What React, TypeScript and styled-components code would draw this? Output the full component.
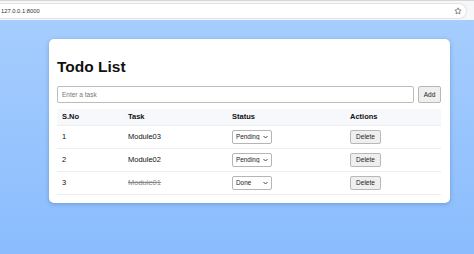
import React from "react";
import styled, { createGlobalStyle } from "styled-components";

const GlobalStyle = createGlobalStyle`
  html, body {
    margin: 0;
    padding: 0;
    width: 474px;
    height: 254px;
    overflow: hidden;
    font-family: "Liberation Sans", Arial, sans-serif;
  }
`

const Page = styled.div`
  width: 474px;
  height: 254px;
  display: flex;
  flex-direction: column;
  background: #fff;
`

const BrowserBar = styled.div`
  height: 20px;
  display: flex;
  flex-direction: column;
  background: #f6f7f8;
  border-top: 1px solid #d7d7d7;
  box-sizing: border-box;
  padding: 2px 7px 1px 0;
`

const AddressPill = styled.div`
  flex: 1;
  display: flex;
  align-items: center;
  justify-content: space-between;
  background: #fff;
  border: 1px solid #e3e3e3;
  border-left: none;
  border-radius: 0 9px 9px 0;
  padding: 0 4px 0 1px;
  font-size: 5.8px;
  color: #333;
`

const Viewport = styled.div`
  flex: 1;
  background: linear-gradient(180deg, #a6cdfe 0%, #8abcfd 100%);
  padding: 19px 24px 0 49px;
`

const Card = styled.div`
  width: 401px;
  height: 164px;
  box-sizing: border-box;
  background: #fff;
  border-radius: 5px;
  box-shadow: 0 1px 4px rgba(40, 80, 140, 0.35);
  padding: 18px 9px 0 8px;
`

const Title = styled.h1`
  margin: 0 0 9px 0;
  font-size: 15.5px;
  line-height: 20px;
  font-weight: 700;
  color: #111;
`

const InputRow = styled.div`
  display: flex;
  gap: 4px;
  height: 17px;
  margin-bottom: 6px;
`

const TaskInput = styled.input`
  flex: 1;
  height: 17px;
  box-sizing: border-box;
  border: 1px solid #bdbdbd;
  border-radius: 2px;
  padding: 0 4px;
  font-family: "Liberation Sans", Arial, sans-serif;
  font-size: 6.5px;
  outline: none;
  &::placeholder { color: #777; }
`

const SmallButton = styled.button<{ w: number; h: number }>`
  width: ${p => p.w}px;
  height: ${p => p.h}px;
  box-sizing: border-box;
  padding: 0;
  border: 1px solid #b8b8b8;
  border-radius: 2px;
  background: #efefef;
  font-family: "Liberation Sans", Arial, sans-serif;
  font-size: 6.5px;
  color: #222;
`

const Table = styled.table`
  width: 384px;
  border-collapse: collapse;
  table-layout: fixed;
`

const HeadRow = styled.tr`
  background: #f6f8fc;
  height: 16px;
`

const Th = styled.th<{ w: number }>`
  width: ${p => p.w - 5}px;
  text-align: left;
  padding: 0 0 0 5px;
  font-size: 7.5px;
  font-weight: 700;
  color: #111;
  border-bottom: 1px solid #eceef2;
`

const Row = styled.tr`
  height: 23px;
`

const Td = styled.td<{ done?: boolean }>`
  padding: 0 0 0 5px;
  font-size: 7.5px;
  color: ${p => (p.done ? "#888" : "#111")};
  text-decoration: ${p => (p.done ? "line-through" : "none")};
  border-bottom: 1px solid #eceef2;
  vertical-align: middle;
`

const SelectWrap = styled.span`
  position: relative;
  display: inline-block;
  vertical-align: middle;
`

const StatusSelect = styled.select`
  appearance: none;
  -webkit-appearance: none;
  width: 40px;
  height: 14px;
  box-sizing: border-box;
  border: 1px solid #b5b5b5;
  border-radius: 2px;
  background: #fff;
  font-family: "Liberation Sans", Arial, sans-serif;
  font-size: 6.4px;
  padding: 0 0 0 3px;
  color: #222;
  display: block;
`

const Chevron = styled.svg`
  position: absolute;
  right: 4px;
  top: 5px;
  pointer-events: none;
`

const tasks = [
  { id: 1, name: "Module03", status: "Pending" },
  { id: 2, name: "Module02", status: "Pending" },
  { id: 3, name: "Module01", status: "Done" },
]

function StarIcon() {
  return (
    <svg width="8" height="8" viewBox="0 0 24 24" fill="none" stroke="#555" strokeWidth="2" strokeLinejoin="round">
      <path d="M12 2.5l2.9 6.1 6.6.8-4.9 4.6 1.3 6.6L12 17.3l-5.9 3.3 1.3-6.6-4.9-4.6 6.6-.8z" />
    </svg>
  )
}

export default function App() {
  return (
    <Page>
      <GlobalStyle />
      <BrowserBar>
        <AddressPill>
          <span>127.0.0.1:8000</span>
          <StarIcon />
        </AddressPill>
      </BrowserBar>
      <Viewport>
        <Card>
          <Title>Todo List</Title>
          <InputRow>
            <TaskInput placeholder="Enter a task" />
            <SmallButton w={23} h={17}>Add</SmallButton>
          </InputRow>
          <Table>
            <thead>
              <HeadRow>
                <Th w={66}>S.No</Th>
                <Th w={104}>Task</Th>
                <Th w={118}>Status</Th>
                <Th w={96}>Actions</Th>
              </HeadRow>
            </thead>
            <tbody>
              {tasks.map(t => (
                <Row key={t.id}>
                  <Td>{t.id}</Td>
                  <Td done={t.status === "Done"}>{t.name}</Td>
                  <Td>
                    <SelectWrap>
                      <StatusSelect defaultValue={t.status}>
                        <option>Pending</option>
                        <option>Done</option>
                      </StatusSelect>
                      <Chevron width="5" height="4" viewBox="0 0 10 7">
                        <path d="M1 1.5l4 4 4-4" fill="none" stroke="#333" strokeWidth="1.8" />
                      </Chevron>
                    </SelectWrap>
                  </Td>
                  <Td>
                    <SmallButton w={31} h={14}>Delete</SmallButton>
                  </Td>
                </Row>
              ))}
            </tbody>
          </Table>
        </Card>
      </Viewport>
    </Page>
  )
}
